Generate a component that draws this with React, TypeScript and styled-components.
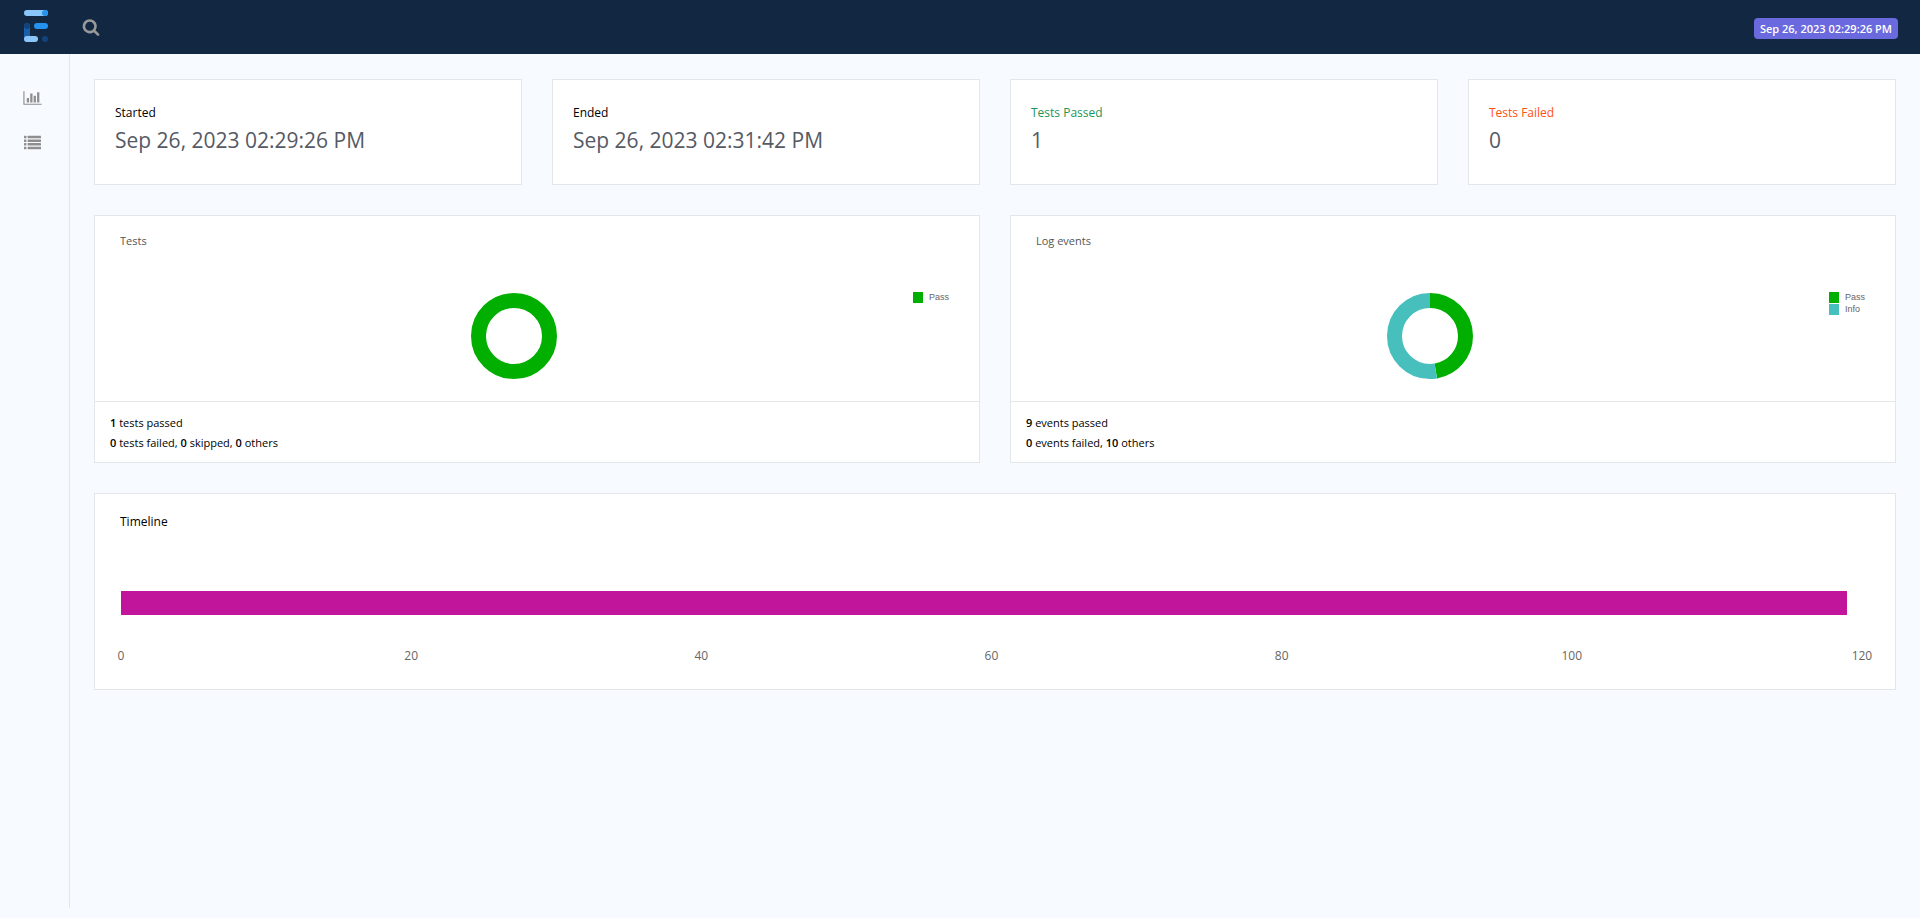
import React from "react";
import styled, { createGlobalStyle } from "styled-components";

const GlobalStyle = createGlobalStyle`
  * { box-sizing: border-box; }
  body {
    margin: 0;
    background: #f7faff;
    color: #000;
    font-family: "Open Sans", "Noto Sans", sans-serif;
    font-size: 12px;
    line-height: 20px;
  }
`;

const Page = styled.div`
  display: flex;
  flex-direction: column;
  min-height: 100vh;
  padding-bottom: 10px;
`;

const Header = styled.header`
  display: flex;
  align-items: center;
  height: 54px;
  padding: 0 22px 2px 24px;
  background: #122742;
`;

const LogoLink = styled.a`
  display: flex;
  margin-right: 32px;
`;

const SearchButton = styled.button`
  display: flex;
  padding: 2px 0 0 1px;
  border: 0;
  background: none;
  color: #999;
  cursor: pointer;
`;

const Badge = styled.span`
  margin: 5px 0 0 auto;
  padding: 0 6px;
  border-radius: 4px;
  background: #6a69de;
  color: #fff;
  font-size: 11px;
  font-weight: 600;
  line-height: 21px;
`;

const Body = styled.div`
  display: flex;
  flex: 1;
`;

const SideNav = styled.nav`
  display: flex;
  flex: none;
  flex-direction: column;
  align-items: center;
  width: 70px;
  padding: 22px 5px 0 0;
  border-right: 1px solid #e4e7ea;
`;

const SideLink = styled.a`
  display: flex;
  align-items: center;
  justify-content: center;
  width: 44px;
  height: 44px;
  color: #8e8e8e;
`;

const Main = styled.main`
  display: grid;
  flex: 1;
  grid-template-columns: repeat(4, minmax(0, 1fr));
  gap: 30px;
  align-content: start;
  padding: 25px 24px 20px;
`;

const Card = styled.section<{ $span?: number }>`
  grid-column: span ${({ $span = 1 }) => $span};
  border: 1px solid #e4e7ea;
  background: #fff;
`;

const StatCard = styled(Card)`
  padding: 23px 20px 27px;
`;

const StatLabel = styled.p<{ $color?: string }>`
  margin: 0;
  color: ${({ $color = "#000" }) => $color};
`;

const StatValue = styled.h3`
  margin: 0;
  color: #555a64;
  font-size: 21px;
  font-weight: 400;
  line-height: 34px;
`;

const PanelTitle = styled.h6<{ $strong?: boolean }>`
  margin: 0;
  padding: ${({ $strong }) => ($strong ? "18px 25px 0" : "15px 25px 0")};
  color: ${({ $strong }) => ($strong ? "#000" : "#555")};
  font-size: ${({ $strong }) => ($strong ? "12px" : "11px")};
  font-weight: 400;
  line-height: 20px;
`;

const ChartArea = styled.div`
  display: flex;
  padding: 41px 25px 21px;
`;

const ChartCanvas = styled.div`
  display: flex;
  flex: 1;
  justify-content: center;
`;

const Legend = styled.ul`
  flex: none;
  width: 47px;
  margin: 0;
  padding: 0 0 0 6px;
  list-style: none;
`;

const LegendItem = styled.li<{ $color: string }>`
  display: flex;
  align-items: flex-start;
  gap: 6px;
  height: 12px;
  color: #666;
  font-family: "Liberation Sans", sans-serif;
  font-size: 9px;
  line-height: 10px;

  &::before {
    content: "";
    width: 10px;
    height: 11px;
    background: ${({ $color }) => $color};
  }
`;

const PanelFooter = styled.footer`
  padding: 11px 15px 9px;
  border-top: 1px solid #e4e7ea;
  font-size: 11px;
`;

const FooterLine = styled.p`
  margin: 0;

  b {
    font-weight: 600;
  }
`;

const Timeline = styled.div`
  padding: 59px 33px 23px 26px;
`;

const TimelineBar = styled.div`
  height: 24px;
  background: #c1169c;
`;

const Axis = styled.ol`
  display: flex;
  justify-content: space-between;
  margin: 31px 0 0;
  padding: 0;
  list-style: none;
  color: #666;
`;

const Tick = styled.li`
  display: flex;
  justify-content: center;
  width: 0;
`;

const PASS = "#00af00";
const INFO = "#46bfbd";

type Slice = { label: string; value: number; color: string };

function Donut({ slices, title }: { slices: Slice[]; title: string }) {
  const total = slices.reduce((sum, slice) => sum + slice.value, 0);
  let start = 0;
  return (
    <svg width="88" height="88" viewBox="0 0 88 88" role="img" aria-label={title}>
      <g transform="rotate(-90 44 44)" fill="none" strokeWidth="15">
        {slices.map((slice) => {
          const share = (slice.value / total) * 100;
          const offset = -start;
          start += share;
          return (
            <circle
              key={slice.label}
              cx="44"
              cy="44"
              r="35.5"
              stroke={slice.color}
              pathLength="100"
              strokeDasharray={share === 100 ? undefined : `${share} ${100 - share}`}
              strokeDashoffset={offset}
            />
          );
        })}
      </g>
    </svg>
  );
}

function Logo() {
  return (
    <svg width="25" height="32" viewBox="0 0 25 32" aria-hidden="true">
      <rect x="0" y="0" width="24" height="6" rx="3" fill="#8bc6f8" />
      <circle cx="21" cy="3" r="3" fill="#2492ee" />
      <rect x="0" y="13" width="6" height="19" rx="3" fill="#1b5fa8" />
      <circle cx="3" cy="16" r="3" fill="#14427a" />
      <rect x="10" y="13" width="14" height="6" rx="3" fill="#2492ee" />
      <rect x="0" y="26" width="14" height="6" rx="3" fill="#8bc6f8" />
      <circle cx="21" cy="29" r="3" fill="#14427a" />
    </svg>
  );
}

function SearchIcon() {
  return (
    <svg width="18" height="18" viewBox="0 0 1792 1792" fill="currentColor" aria-hidden="true">
      <path d="M1216 832q0-185-131.5-316.5T768 384 451.5 515.5 320 832t131.5 316.5T768 1280t316.5-131.5T1216 832zm512 832q0 52-38 90t-90 38q-54 0-90-38l-343-342q-179 124-399 124-143 0-273.5-55.5t-225-150-150-225T64 832t55.5-273.5 150-225 225-150T768 128t273.5 55.5 225 150 150 225T1472 832q0 220-124 399l343 343q37 37 37 90z" />
    </svg>
  );
}

function BarChartIcon() {
  return (
    <svg width="19" height="16" viewBox="0 0 2048 1792" fill="currentColor" aria-hidden="true">
      <path d="M640 896v512H384V896h256zm384-512v1024H768V384h256zm1024 1152v128H0V128h128v1408h1920zm-640-896v768h-256V640h256zm384-384v1152h-256V256h256z" />
    </svg>
  );
}

function ListIcon() {
  return (
    <svg width="17" height="17" viewBox="0 0 1792 1792" fill="currentColor" aria-hidden="true">
      {[192, 576, 960, 1344].map((y) => (
        <g key={y}>
          <rect x="0" y={y} width="256" height="256" rx="32" />
          <rect x="384" y={y} width="1408" height="256" rx="32" />
        </g>
      ))}
    </svg>
  );
}

function DonutPanel({ title, slices, children }: { title: string; slices: Slice[]; children: React.ReactNode }) {
  return (
    <Card $span={2}>
      <PanelTitle>{title}</PanelTitle>
      <ChartArea>
        <ChartCanvas>
          <Donut slices={slices} title={title} />
        </ChartCanvas>
        <Legend>
          {slices.map((slice) => (
            <LegendItem key={slice.label} $color={slice.color}>
              {slice.label}
            </LegendItem>
          ))}
        </Legend>
      </ChartArea>
      <PanelFooter>{children}</PanelFooter>
    </Card>
  );
}

const stats = [
  { label: "Started", value: "Sep 26, 2023 02:29:26 PM" },
  { label: "Ended", value: "Sep 26, 2023 02:31:42 PM" },
  { label: "Tests Passed", value: "1", color: "#1d9557" },
  { label: "Tests Failed", value: "0", color: "#ff5010" },
];

const ticks = [0, 20, 40, 60, 80, 100, 120];
const duration = 119;

export default function App() {
  return (
    <Page>
      <GlobalStyle />
      <Header>
        <LogoLink href="#" aria-label="Home">
          <Logo />
        </LogoLink>
        <SearchButton type="button" aria-label="Search">
          <SearchIcon />
        </SearchButton>
        <Badge>Sep 26, 2023 02:29:26 PM</Badge>
      </Header>
      <Body>
        <SideNav>
          <SideLink href="#dashboard" aria-label="Dashboard">
            <BarChartIcon />
          </SideLink>
          <SideLink href="#tests" aria-label="Tests">
            <ListIcon />
          </SideLink>
        </SideNav>
        <Main>
          {stats.map((stat) => (
            <StatCard key={stat.label}>
              <StatLabel $color={stat.color}>{stat.label}</StatLabel>
              <StatValue>{stat.value}</StatValue>
            </StatCard>
          ))}
          <DonutPanel title="Tests" slices={[{ label: "Pass", value: 1, color: PASS }]}>
            <FooterLine>
              <b>1</b> tests passed
            </FooterLine>
            <FooterLine>
              <b>0</b> tests failed, <b>0</b> skipped, <b>0</b> others
            </FooterLine>
          </DonutPanel>
          <DonutPanel
            title="Log events"
            slices={[
              { label: "Pass", value: 9, color: PASS },
              { label: "Info", value: 10, color: INFO },
            ]}
          >
            <FooterLine>
              <b>9</b> events passed
            </FooterLine>
            <FooterLine>
              <b>0</b> events failed, <b>10</b> others
            </FooterLine>
          </DonutPanel>
          <Card $span={4}>
            <PanelTitle $strong>Timeline</PanelTitle>
            <Timeline>
              <TimelineBar style={{ width: `${(duration / ticks[ticks.length - 1]) * 100}%` }} />
              <Axis>
                {ticks.map((tick) => (
                  <Tick key={tick}>{tick}</Tick>
                ))}
              </Axis>
            </Timeline>
          </Card>
        </Main>
      </Body>
    </Page>
  );
}
